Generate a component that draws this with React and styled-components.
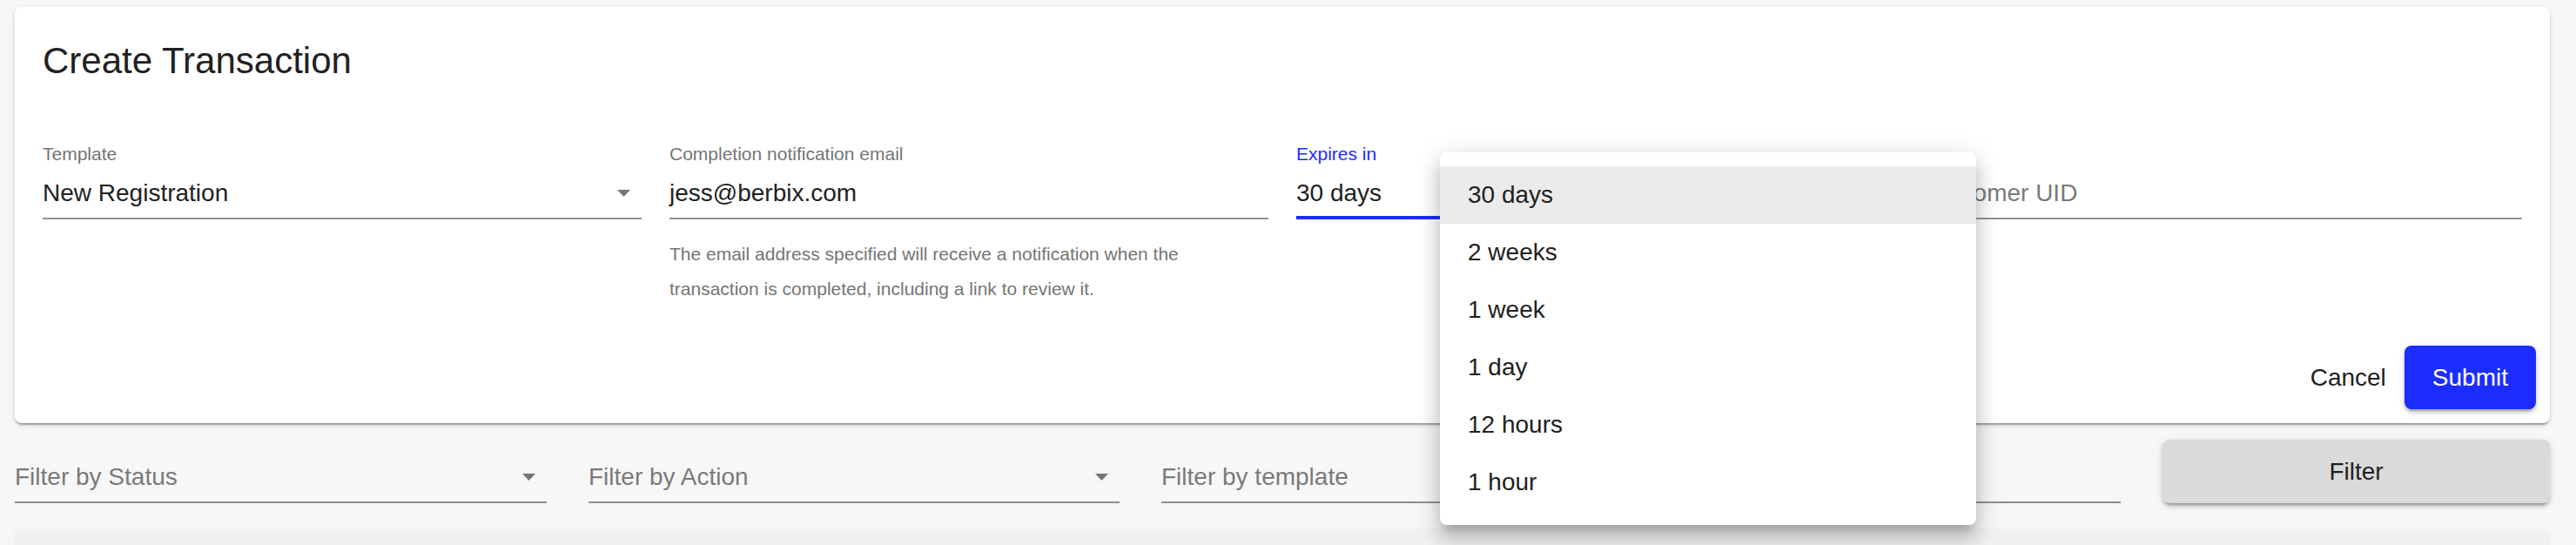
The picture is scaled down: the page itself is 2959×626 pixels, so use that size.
import styled, { createGlobalStyle } from "styled-components";

const BLUE = "#1b2dff";

const GlobalStyle = createGlobalStyle`
  * { box-sizing: border-box; }
  body {
    margin: 0;
    background: #f7f7f7;
    font-family: "Liberation Sans", Arial, sans-serif;
    color: #212121;
    overflow: hidden;
  }
`;

const Page = styled.div`
  height: 626px;
  padding: 8px 30px 0 17px;
  overflow: hidden;
`;

const Card = styled.div`
  background: #fff;
  border-radius: 8px;
  box-shadow: 0 4px 2px -2px rgba(0, 0, 0, 0.2), 0 2px 2px 0 rgba(0, 0, 0, 0.14),
    0 2px 6px 0 rgba(0, 0, 0, 0.12);
`;

const CardContent = styled.div`
  padding: 37px 32px 29px;
`;

const Title = styled.h2`
  margin: 0 0 70px;
  font-size: 42px;
  line-height: 50px;
  font-weight: 400;
  color: #212121;
`;

const FieldGrid = styled.div`
  display: grid;
  grid-template-columns: repeat(4, 1fr);
  column-gap: 32px;
  align-items: start;
`;

const Field = styled.div`
  position: relative;
  display: flex;
  flex-direction: column;
`;

const Label = styled.label`
  font-size: 21px;
  line-height: 24px;
  height: 24px;
  color: ${(p) => (p.$focused ? BLUE : "#757575")};
`;

const InputRow = styled.div`
  display: flex;
  align-items: center;
  justify-content: space-between;
  margin-top: ${(p) => (p.$withLabel ? "16px" : "0")};
  height: 47px;
  padding-bottom: ${(p) => (p.$focused ? "9px" : "11px")};
  border-bottom: ${(p) =>
    p.$focused ? `4px solid ${BLUE}` : "2px solid rgba(0, 0, 0, 0.42)"};
  font-size: 28px;
  line-height: 34px;
`;

const Value = styled.span`
  color: ${(p) => (p.$placeholder ? "#7a7a7a" : "#212121")};
  white-space: nowrap;
`;

const Arrow = styled.svg`
  width: 15px;
  height: 8px;
  margin-right: 13px;
  flex-shrink: 0;
`;

const Helper = styled.p`
  margin: 20px 0 0;
  max-width: 640px;
  font-size: 21px;
  line-height: 40px;
  color: #757575;
`;

const Actions = styled.div`
  display: flex;
  justify-content: flex-end;
  align-items: center;
  gap: 5px;
  padding: 16px;
`;

const BaseButton = styled.button`
  height: 73px;
  border: none;
  border-radius: 8px;
  font-family: inherit;
  font-size: 28px;
  cursor: pointer;
`;

const TextButton = styled(BaseButton)`
  padding: 0 16px;
  background: transparent;
  color: #212121;
`;

const SubmitButton = styled(BaseButton)`
  padding: 0 32px;
  background: ${BLUE};
  color: #fff;
  box-shadow: 0 6px 2px -4px rgba(0, 0, 0, 0.2), 0 4px 4px 0 rgba(0, 0, 0, 0.14),
    0 2px 10px 0 rgba(0, 0, 0, 0.12);
`;

const FilterRow = styled.div`
  display: grid;
  grid-template-columns: 611fr 610fr 1102fr 445fr;
  column-gap: 48px;
  align-items: end;
  margin-top: 19px;
`;

const FilterButton = styled(BaseButton)`
  width: 100%;
  background: #dadada;
  color: #212121;
  box-shadow: 0 6px 2px -4px rgba(0, 0, 0, 0.2), 0 4px 4px 0 rgba(0, 0, 0, 0.14),
    0 2px 10px 0 rgba(0, 0, 0, 0.12);
`;

const ListPanel = styled.div`
  margin-top: 31px;
  height: 60px;
  background: #f0f0f0;
  border-radius: 8px 8px 0 0;
  box-shadow: 0 -1px 4px rgba(0, 0, 0, 0.04);
`;

const Menu = styled.ul`
  position: absolute;
  left: 165px;
  top: 10px;
  z-index: 10;
  width: 616px;
  margin: 0;
  padding: 16px 0;
  list-style: none;
  background: #fff;
  border-radius: 8px;
  box-shadow: 0 10px 10px -6px rgba(0, 0, 0, 0.2), 0 16px 20px 2px rgba(0, 0, 0, 0.14),
    0 6px 28px 4px rgba(0, 0, 0, 0.12);
`;

const MenuItem = styled.li`
  display: flex;
  align-items: center;
  height: 66px;
  padding-left: 32px;
  font-size: 28px;
  color: #212121;
  background: ${(p) => (p.$selected ? "#ebebeb" : "transparent")};
`;

const DropArrow = () => (
  <Arrow viewBox="0 0 15 8">
    <path d="M0 0 L15 0 L7.5 8 Z" fill="#757575" />
  </Arrow>
);

const expiryOptions = ["30 days", "2 weeks", "1 week", "1 day", "12 hours", "1 hour"];

function App() {
  return (
    <Page>
      <GlobalStyle />
      <Card>
        <CardContent>
          <Title>Create Transaction</Title>
          <FieldGrid>
            <Field>
              <Label>Template</Label>
              <InputRow $withLabel>
                <Value>New Registration</Value>
                <DropArrow />
              </InputRow>
            </Field>
            <Field>
              <Label>Completion notification email</Label>
              <InputRow $withLabel>
                <Value>jess@berbix.com</Value>
              </InputRow>
              <Helper>
                The email address specified will receive a notification when the
                transaction is completed, including a link to review it.
              </Helper>
            </Field>
            <Field>
              <Label $focused>Expires in</Label>
              <InputRow $withLabel $focused>
                <Value>30 days</Value>
              </InputRow>
              <Menu>
                {expiryOptions.map((opt, i) => (
                  <MenuItem key={opt} $selected={i === 0}>
                    {opt}
                  </MenuItem>
                ))}
              </Menu>
            </Field>
            <Field>
              <Label />
              <InputRow $withLabel>
                <Value $placeholder>Customer UID</Value>
              </InputRow>
            </Field>
          </FieldGrid>
        </CardContent>
        <Actions>
          <TextButton>Cancel</TextButton>
          <SubmitButton>Submit</SubmitButton>
        </Actions>
      </Card>

      <FilterRow>
        <InputRow>
          <Value $placeholder>Filter by Status</Value>
          <DropArrow />
        </InputRow>
        <InputRow>
          <Value $placeholder>Filter by Action</Value>
          <DropArrow />
        </InputRow>
        <InputRow>
          <Value $placeholder>Filter by template</Value>
        </InputRow>
        <FilterButton>Filter</FilterButton>
      </FilterRow>

      <ListPanel />
    </Page>
  );
}

export default App;
